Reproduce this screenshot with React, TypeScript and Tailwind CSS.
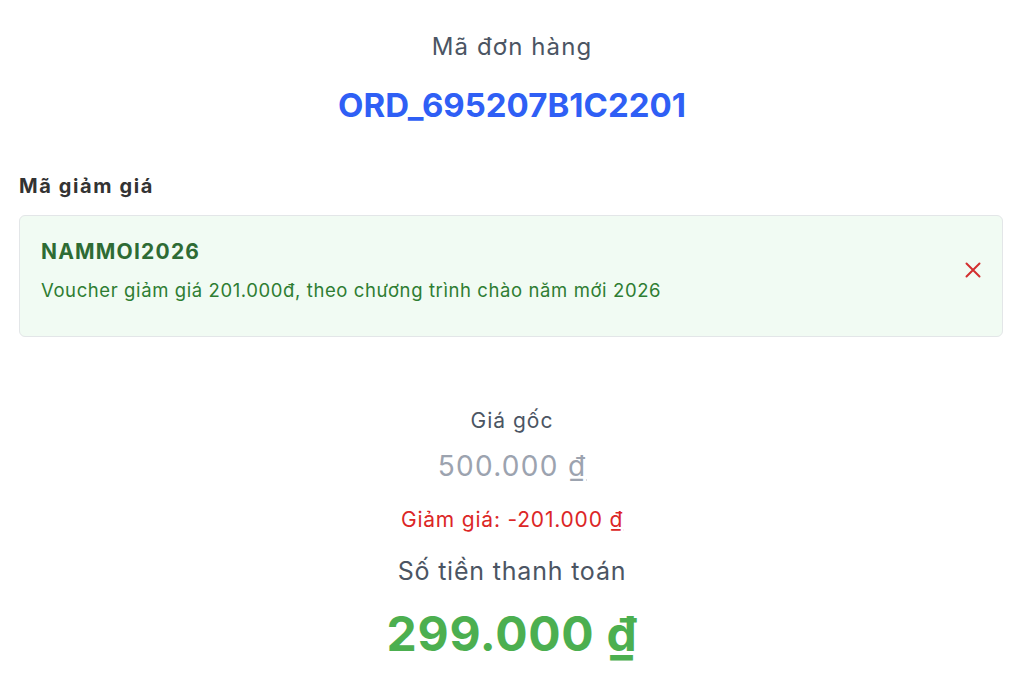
import React from "react";

export default function App() {
  return (
    <div
      className="w-[1024px] h-[695px] bg-white overflow-hidden"
      style={{ fontFamily: "Inter, 'Noto Sans', sans-serif" }}
    >
      <div className="flex flex-col items-center pt-[31px]">
        <div className="text-[24px] leading-[32px] tracking-[1.1px] text-[#4b5563]">Mã đơn hàng</div>
        <div className="mt-[22px] text-[33px] leading-[40px] font-bold text-[#2f5ff5]">
          ORD_695207B1C2201
        </div>
      </div>
      <div className="pl-[19px] pr-[21px] mt-[47px]">
        <div className="text-[20px] leading-[28px] font-bold tracking-[1.6px] text-[#333333]">Mã giảm giá</div>
        <div className="mt-[15px] h-[122px] rounded-[6px] border border-[#e3e6e8] bg-[#f1fbf3] flex items-start justify-between pt-[22px] pl-[21px] pr-[21px]">
          <div className="flex flex-col">
            <div className="text-[21px] leading-[28px] font-bold tracking-[1.2px] text-[#2e6b34]">NAMMOI2026</div>
            <div className="mt-[11px] text-[18.5px] leading-[26px] tracking-[0.6px] text-[#2e7d32]">
              Voucher giảm giá 201.000đ, theo chương trình chào năm mới 2026
            </div>
          </div>
          <svg width="16" height="16" viewBox="0 0 16 16" className="mt-[24px]">
            <path d="M1.5 1.5 L14.5 14.5 M14.5 1.5 L1.5 14.5" stroke="#d32f2f" strokeWidth="2" strokeLinecap="round" />
          </svg>
        </div>
      </div>
      <div className="flex flex-col items-center mt-[69px]">
        <div className="text-[21px] leading-[30px] tracking-[1px] text-[#4b5563]">Giá gốc</div>
        <div className="mt-[12px] text-[28px] leading-[36px] tracking-[1.3px] text-[#9ca3af]">
          500.000 <span className="underline underline-offset-[3px]">₫</span>
        </div>
        <div className="mt-[22px] text-[21px] leading-[28px] tracking-[0.8px] text-[#dc2626]">
          Giảm giá: -201.000 <span className="underline underline-offset-[2px]">₫</span>
        </div>
        <div className="mt-[20px] text-[25px] leading-[34px] tracking-[0.8px] text-[#4b5563]">Số tiền thanh toán</div>
        <div className="mt-[18px] text-[48px] leading-[56px] font-bold tracking-[0.7px] text-[#4caf50]">
          299.000 <span className="underline underline-offset-[4px]">₫</span>
        </div>
      </div>
    </div>
  );
}
